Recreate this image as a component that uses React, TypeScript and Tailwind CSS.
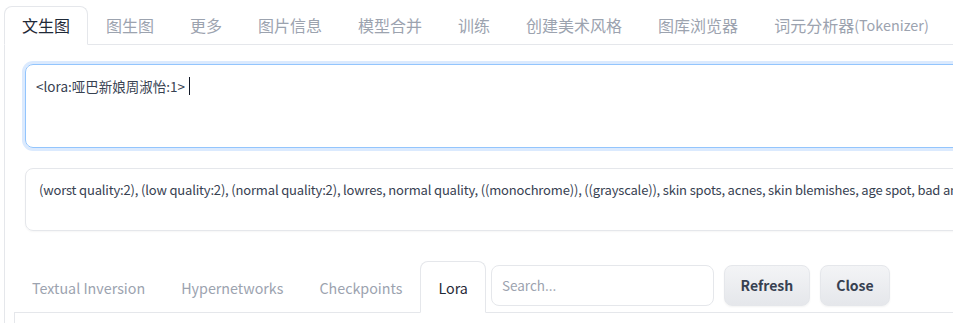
const topTabs = [
  "文生图",
  "图生图",
  "更多",
  "图片信息",
  "模型合并",
  "训练",
  "创建美术风格",
  "图库浏览器",
  "词元分析器",
];

const netTabs = ["Textual Inversion", "Hypernetworks", "Checkpoints", "Lora"];

const negative =
  "(worst quality:2), (low quality:2), (normal quality:2), lowres, normal quality, ((monochrome)), ((grayscale)), skin spots, acnes, skin blemishes, age spot, bad anatomy, bad hands, text, error, missing fingers";

export default function App() {
  return (
    <div className="h-[323px] w-[953px] overflow-hidden bg-white font-['Noto_Sans_CJK_SC','Noto_Sans',sans-serif]">
      <div className="pl-[4px] pt-[6px]">
        {/* main tabs */}
        <div className="flex h-[39px] items-end border-b border-[#e5e7eb]">
          {topTabs.map((tab, i) => {
            const active = i === 0;
            return (
              <div
                key={tab}
                className={`-mb-px flex h-[39px] shrink-0 items-center whitespace-nowrap rounded-t-[8px] border px-[17px] pb-[1px] text-[16px] leading-none ${
                  active
                    ? "border-[#e5e7eb] border-b-white bg-white text-[#1f2937]"
                    : "border-transparent text-[#9ca3af]"
                }`}
              >
                {tab}
                {tab === "词元分析器" && <span className="text-[14.4px]">(Tokenizer)</span>}
              </div>
            );
          })}
        </div>

        {/* panel */}
        <div className="h-[300px] border-l border-[#e5e7eb] pl-[20px] pt-[19px]">
          <div className="flex h-[84px] w-[960px] rounded-[8px] border border-[#93c5fd] px-[10px] pt-[11px] shadow-[0_0_0_3px_#dbeafe]">
            <span className="text-[13.5px] leading-[20px] text-[#374151]">
              {"<lora:哑巴新娘周淑怡:1>"}
            </span>
            <span className="ml-[4px] mt-[1px] h-[18px] w-px bg-[#111827]" />
          </div>

          <div className="mt-[20px] h-[63px] w-[960px] overflow-hidden rounded-[8px] border border-[#e5e7eb] px-[13px] pt-[11px] shadow-[0_1px_2px_rgba(0,0,0,0.04)]">
            <p className="whitespace-nowrap text-[13px] leading-[20px] tracking-[-0.17px] text-[#374151]">{negative}</p>
          </div>

          {/* extra networks */}
          <div className="ml-[-11px] mt-[30px]">
            <div className="flex h-[52px] items-end border-b border-[#e5e7eb]">
              {netTabs.map((tab) => {
                const active = tab === "Lora";
                return (
                  <div
                    key={tab}
                    className={`-mb-px flex h-[52px] shrink-0 items-center whitespace-nowrap rounded-t-[8px] border px-[17px] pt-[2px] text-[14.3px] leading-none ${
                      active
                        ? "border-[#e5e7eb] border-b-white bg-white text-[#1f2937]"
                        : "border-transparent text-[#9ca3af]"
                    }`}
                  >
                    {tab}
                  </div>
                );
              })}
              <div className="mb-[6px] ml-[5px] flex items-center gap-[10px] self-end">
                <div className="flex h-[41px] w-[223px] items-center rounded-[8px] border border-[#e5e7eb] bg-white px-[10px] text-[13.5px] text-[#9ca3af]">
                  Search...
                </div>
                <button className="h-[41px] w-[86px] rounded-[8px] border border-[#e5e7eb] bg-gradient-to-b from-[#f3f4f6] to-[#e5e7eb] text-[14px] font-semibold text-[#374151] shadow-[0_1px_2px_rgba(0,0,0,0.05)]">
                  Refresh
                </button>
                <button className="h-[41px] w-[70px] rounded-[8px] border border-[#e5e7eb] bg-gradient-to-b from-[#f3f4f6] to-[#e5e7eb] text-[14px] font-semibold text-[#374151] shadow-[0_1px_2px_rgba(0,0,0,0.05)]">
                  Close
                </button>
              </div>
            </div>
            <div className="h-[20px] border-l border-[#e5e7eb]" />
          </div>
        </div>
      </div>
    </div>
  );
}
